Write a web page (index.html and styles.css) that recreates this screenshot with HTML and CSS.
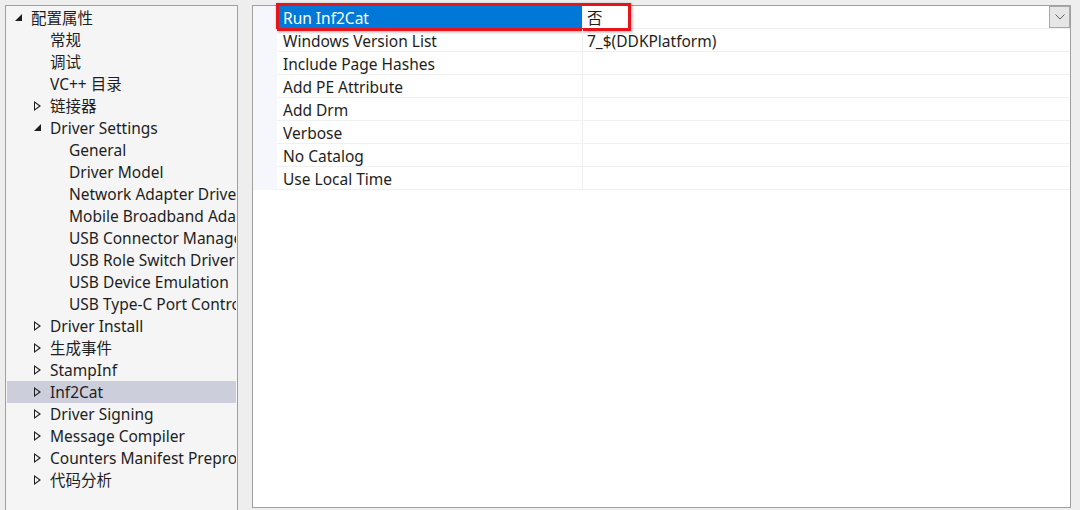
FILE: index.html
```html
<!DOCTYPE html>
<html>
<head>
<meta charset="utf-8">
<link rel="stylesheet" href="styles.css">
</head>
<body>
<div class="app">
  <div class="tree">
    <div class="node l0"><span class="arrow open"></span><span class="label">配置属性</span></div>
    <div class="node l1"><span class="arrow"></span><span class="label">常规</span></div>
    <div class="node l1"><span class="arrow"></span><span class="label">调试</span></div>
    <div class="node l1"><span class="arrow"></span><span class="label">VC++ 目录</span></div>
    <div class="node l1"><span class="arrow closed"></span><span class="label">链接器</span></div>
    <div class="node l1"><span class="arrow open"></span><span class="label">Driver Settings</span></div>
    <div class="node l2"><span class="arrow"></span><span class="label">General</span></div>
    <div class="node l2"><span class="arrow"></span><span class="label">Driver Model</span></div>
    <div class="node l2"><span class="arrow"></span><span class="label">Network Adapter Driver</span></div>
    <div class="node l2"><span class="arrow"></span><span class="label">Mobile Broadband Adapter</span></div>
    <div class="node l2"><span class="arrow"></span><span class="label">USB Connector Manager</span></div>
    <div class="node l2"><span class="arrow"></span><span class="label">USB Role Switch Driver</span></div>
    <div class="node l2"><span class="arrow"></span><span class="label">USB Device Emulation</span></div>
    <div class="node l2"><span class="arrow"></span><span class="label">USB Type-C Port Controller</span></div>
    <div class="node l1"><span class="arrow closed"></span><span class="label">Driver Install</span></div>
    <div class="node l1"><span class="arrow closed"></span><span class="label">生成事件</span></div>
    <div class="node l1"><span class="arrow closed"></span><span class="label">StampInf</span></div>
    <div class="node l1 selected"><span class="arrow closed"></span><span class="label">Inf2Cat</span></div>
    <div class="node l1"><span class="arrow closed"></span><span class="label">Driver Signing</span></div>
    <div class="node l1"><span class="arrow closed"></span><span class="label">Message Compiler</span></div>
    <div class="node l1"><span class="arrow closed"></span><span class="label">Counters Manifest Preprocessor</span></div>
    <div class="node l1"><span class="arrow closed"></span><span class="label">代码分析</span></div>
  </div>
  <div class="splitter"></div>
  <div class="grid">
    <div class="rows">
      <div class="row active">
        <div class="gutter"></div>
        <div class="name">Run Inf2Cat</div>
        <div class="value">否<span class="drop"><svg width="10" height="6" viewBox="0 0 10 6"><path d="M0.5 0.5 L5 5 L9.5 0.5" fill="none" stroke="#606060" stroke-width="1"/></svg></span></div>
        <div class="annot"></div>
      </div>
      <div class="row"><div class="gutter"></div><div class="name">Windows Version List</div><div class="value">7_$(DDKPlatform)</div></div>
      <div class="row"><div class="gutter"></div><div class="name">Include Page Hashes</div><div class="value"></div></div>
      <div class="row"><div class="gutter"></div><div class="name">Add PE Attribute</div><div class="value"></div></div>
      <div class="row"><div class="gutter"></div><div class="name">Add Drm</div><div class="value"></div></div>
      <div class="row"><div class="gutter"></div><div class="name">Verbose</div><div class="value"></div></div>
      <div class="row"><div class="gutter"></div><div class="name">No Catalog</div><div class="value"></div></div>
      <div class="row"><div class="gutter"></div><div class="name">Use Local Time</div><div class="value"></div></div>
    </div>
  </div>
</div>
</body>
</html>
```
FILE: styles.css
```css
html, body {
  margin: 0;
  padding: 0;
  background: #eeeeee;
  width: 1080px;
  height: 510px;
  overflow: hidden;
  font-family: "Noto Sans", "Noto Sans CJK SC", sans-serif;
  font-size: 15.5px;
  color: #1e1e1e;
}
.app {
  display: flex;
  padding: 5px 0 0 5px;
  height: 510px;
  box-sizing: border-box;
}
.tree {
  width: 229px;
  height: 510px;
  flex: none;
  background: #f5f5f5;
  border: 1px solid #a0a0a0;
  border-bottom: none;
  padding: 1px 1px 0 1px;
  box-sizing: content-box;
  overflow: hidden;
}
.node {
  height: 22px;
  display: flex;
  align-items: center;
  white-space: nowrap;
  overflow: hidden;
}
.node.selected {
  background: #cccedb;
}
.node .arrow {
  width: 17px;
  height: 22px;
  flex: none;
  position: relative;
}
.node .arrow.closed::before {
  content: "";
  position: absolute;
  left: 1px;
  top: 6px;
  width: 0;
  height: 0;
  border-left: 7px solid #1e1e1e;
  border-top: 5px solid transparent;
  border-bottom: 5px solid transparent;
}
.node .arrow.closed::after {
  content: "";
  position: absolute;
  left: 2px;
  top: 8px;
  width: 0;
  height: 0;
  border-left: 4px solid #f5f5f5;
  border-top: 3px solid transparent;
  border-bottom: 3px solid transparent;
}
.node.selected .arrow.closed::after {
  border-left-color: #cccedb;
}
.node .arrow.open::before {
  content: "";
  position: absolute;
  left: 1px;
  top: 7px;
  width: 0;
  height: 0;
  border-right: 7px solid #1e1e1e;
  border-top: 7px solid transparent;
}
.node .label {
  line-height: 22px;
}
.l0 { padding-left: 7px; }
.l1 { padding-left: 26px; }
.l2 { padding-left: 45px; }

.splitter {
  width: 14px;
  flex: none;
  background: #eeeeee;
}
.grid {
  width: 817px;
  height: 501px;
  background: #ffffff;
  border: 1px solid #a0a0a0;
  flex: none;
}
.rows {
  display: flex;
  flex-direction: column;
}
.row {
  display: flex;
  height: 23px;
  position: relative;
}
.gutter {
  width: 24px;
  flex: none;
  background: #f5f7fc;
}
.name {
  width: 299px;
  height: 22px;
  flex: none;
  padding-left: 6px;
  line-height: 24px;
  border-bottom: 1px solid #f0f0f0;
  border-right: 1px solid #f0f0f0;
  white-space: nowrap;
}
.value {
  flex: 1;
  height: 22px;
  padding-left: 4px;
  line-height: 24px;
  border-bottom: 1px solid #f0f0f0;
  position: relative;
}
.row.active .name {
  background: #0078d7;
  color: #ffffff;
}
.drop {
  position: absolute;
  right: 0;
  top: 0;
  width: 21px;
  height: 22px;
  background: #e6e6e6;
  border: 1px solid #a8a8a8;
  box-sizing: border-box;
  display: flex;
  align-items: center;
  justify-content: center;
}
.annot {
  position: absolute;
  left: 23px;
  top: -3px;
  width: 355px;
  height: 28px;
  border: 3px solid #e8141c;
  box-sizing: border-box;
  box-shadow: 1px 1px 3px rgba(0,0,0,0.35);
  pointer-events: none;
}
```
